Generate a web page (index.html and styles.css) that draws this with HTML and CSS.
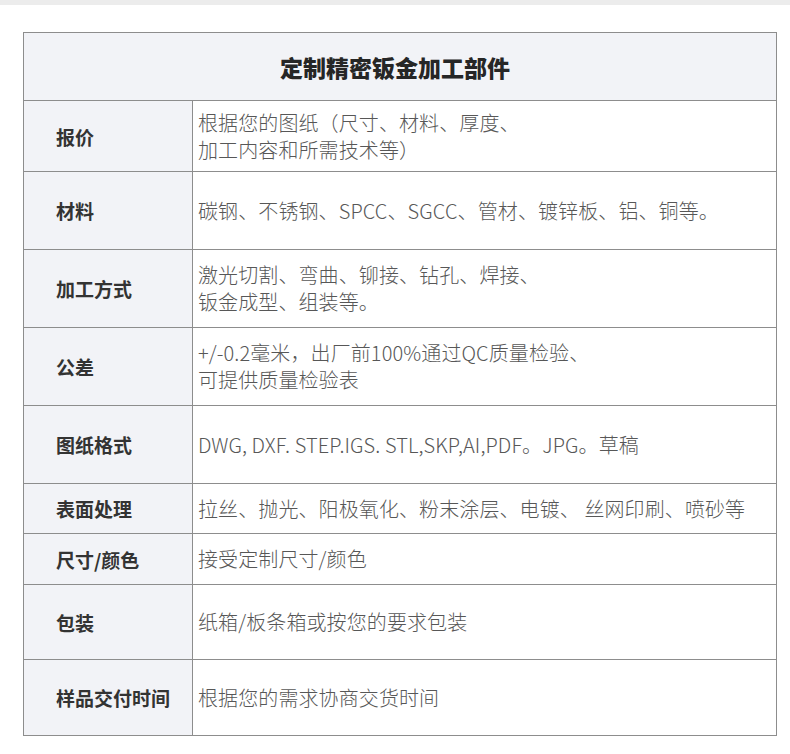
FILE: index.html
```html
<!DOCTYPE html>
<html lang="zh-CN">
<head>
<meta charset="utf-8">
<title>定制精密钣金加工部件</title>
<link rel="stylesheet" href="styles.css">
</head>
<body>
<div class="topbar"></div>
<div class="page">
  <div class="spec">
    <div class="spec-title">定制精密钣金加工部件</div>
    <div class="row h70"><div class="label">报价</div><div class="value"><span class="line">根据您的图纸（尺寸、材料、厚度、</span><span class="line">加工内容和所需技术等）</span></div></div>
    <div class="row h77"><div class="label">材料</div><div class="value"><span class="line">碳钢、不锈钢、SPCC、SGCC、管材、镀锌板、铝、铜等。</span></div></div>
    <div class="row h77"><div class="label">加工方式</div><div class="value"><span class="line">激光切割、弯曲、铆接、钻孔、焊接、</span><span class="line">钣金成型、组装等。</span></div></div>
    <div class="row h77"><div class="label">公差</div><div class="value"><span class="line">+/-0.2毫米，出厂前100%通过QC质量检验、</span><span class="line">可提供质量检验表</span></div></div>
    <div class="row h77"><div class="label">图纸格式</div><div class="value"><span class="line">DWG, DXF. STEP.IGS. STL,SKP,AI,PDF。JPG。草稿</span></div></div>
    <div class="row h49"><div class="label">表面处理</div><div class="value"><span class="line">拉丝、抛光、阳极氧化、粉末涂层、电镀、 丝网印刷、喷砂等</span></div></div>
    <div class="row h50"><div class="label">尺寸/颜色</div><div class="value"><span class="line">接受定制尺寸/颜色</span></div></div>
    <div class="row h74"><div class="label">包装</div><div class="value"><span class="line">纸箱/板条箱或按您的要求包装</span></div></div>
    <div class="row h75 last"><div class="label">样品交付时间</div><div class="value"><span class="line">根据您的需求协商交货时间</span></div></div>
  </div>
</div>
</body>
</html>
```
FILE: styles.css
```css
html, body {
  margin: 0;
  padding: 0;
  background: #ffffff;
}
body {
  font-family: "Noto Sans CJK SC", "Noto Sans", sans-serif;
}
.topbar {
  height: 5px;
  background: #ececec;
}
.page {
  padding: 27px 0 0 23px;
}
.spec {
  width: 752px;
  border: 1px solid #8d8d8d;
}
.spec-title {
  height: 67px;
  border-bottom: 1px solid #8d8d8d;
  background: #f2f3f7;
  display: flex;
  align-items: center;
  justify-content: center;
  font-size: 23px;
  font-weight: 900;
  color: #262626;
  padding-right: 10px;
}
.row {
  display: grid;
  grid-template-columns: 169px 1fr;
  border-bottom: 1px solid #8d8d8d;
}
.row.last {
  border-bottom: none;
}
.h70 { height: 70px; }
.h77 { height: 77px; }
.h49 { height: 49px; }
.h50 { height: 50px; }
.h74 { height: 74px; }
.h75 { height: 75px; }
.label {
  background: #f2f3f7;
  border-right: 1px solid #8d8d8d;
  display: flex;
  align-items: center;
  padding-left: 32px;
  font-size: 19px;
  font-weight: 700;
  color: #333333;
}
.value {
  display: flex;
  flex-direction: column;
  justify-content: center;
  align-items: flex-start;
  gap: 1px;
  padding-left: 5px;
  font-size: 20px;
  line-height: 26px;
  font-weight: 300;
  color: #575757;
  letter-spacing: 0.1px;
  white-space: nowrap;
}
.line {
  display: block;
}
```
